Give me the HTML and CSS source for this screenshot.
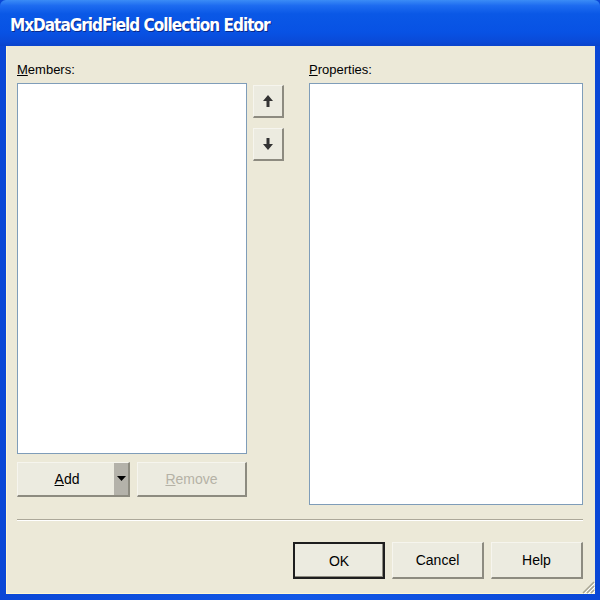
FILE: index.html
```html
<!DOCTYPE html>
<html>
<head>
<meta charset="utf-8">
<link rel="stylesheet" href="styles.css">
</head>
<body>
<div class="window">
  <div class="titlebar"><span class="title">MxDataGridField Collection Editor</span></div>
  <div class="client">
    <div class="main">
      <div class="col-members">
        <div class="label"><u>M</u>embers:</div>
        <div class="listbox members-list"></div>
        <div class="add-row">
          <div class="btn add-btn">
            <span class="add-text"><u>A</u>dd</span>
            <span class="drop"><svg width="9" height="6" viewBox="0 0 9 6"><path d="M0 0H9L4.5 5Z" fill="#000"/></svg></span>
          </div>
          <div class="btn remove-btn"><u>R</u>emove</div>
        </div>
      </div>
      <div class="col-arrows">
        <div class="btn arrow-btn"><svg width="10" height="12" viewBox="0 0 10 12"><path d="M5 0L10 6H6.5V12H3.5V6H0Z" fill="#333"/></svg></div>
        <div class="btn arrow-btn"><svg width="10" height="12" viewBox="0 0 10 12"><path d="M3.5 0H6.5V6H10L5 12L0 6H3.5Z" fill="#333"/></svg></div>
      </div>
      <div class="col-props">
        <div class="label"><u>P</u>roperties:</div>
        <div class="listbox props-list"></div>
      </div>
    </div>
    <div class="separator"></div>
    <div class="footer">
      <div class="btn foot-btn default">OK</div>
      <div class="btn foot-btn">Cancel</div>
      <div class="btn foot-btn">Help</div>
    </div>
    <svg class="grip" width="14" height="14" viewBox="0 0 14 14">
      <path d="M13 2L2 13M13 6L6 13M13 10L10 13" stroke="#a8a594" stroke-width="1.5"/>
      <path d="M14 3L3 14M14 7L7 14M14 11L11 14" stroke="#fff" stroke-width="1"/>
    </svg>
  </div>
</div>
</body>
</html>
```
FILE: styles.css
```css
html, body {
  margin: 0;
  padding: 0;
  background: #0a4fd8;
}
.window {
  width: 600px;
  height: 600px;
  background: linear-gradient(90deg, #0a47d6 0%, #1258e6 50%, #0a47d6 100%);
  display: flex;
  flex-direction: column;
  font-family: "Liberation Sans", Arial, sans-serif;
  box-sizing: border-box;
  padding: 0 5px 6px 6px;
}
.titlebar {
  height: 46px;
  margin: 0 -5px 0 -6px;
  background: linear-gradient(180deg, #3b8cf6 0%, #1e6cf0 12%, #0a58e6 30%, #0852e4 70%, #0a4ad8 90%, #0a44cc 100%);
  border-radius: 6px 6px 0 0;
  display: flex;
  align-items: center;
  padding-left: 10px;
  box-sizing: border-box;
}
.title {
  color: #fff;
  font-family: "DejaVu Sans Condensed", "Liberation Sans", sans-serif;
  font-weight: bold;
  font-size: 17px;
  letter-spacing: -1px;
  text-shadow: 1px 1px 0 #0a2a8a;
  margin-top: 4px;
}
.client {
  flex: 1;
  background: #ece9d8;
  box-shadow: inset 1px 0 0 #fdf7d4, inset 0 -1px 0 #fdf7d4;
  position: relative;
  padding: 14px 12px 0 11px;
  display: flex;
  flex-direction: column;
}
.main {
  display: flex;
}
.label {
  font-size: 13px;
  color: #000;
  height: 23px;
  line-height: 20px;
}
.col-members {
  width: 230px;
  display: flex;
  flex-direction: column;
}
.listbox {
  background: #fff;
  border: 1px solid #7f9db9;
  box-sizing: border-box;
}
.members-list {
  height: 371px;
}
.add-row {
  display: flex;
  margin-top: 8px;
  gap: 7px;
}
.btn {
  background: #ecebe0;
  border: 1px solid #f6f5ee;
  border-right: 2px solid #8d8b80;
  border-bottom: 2px solid #8d8b80;
  box-sizing: border-box;
  display: flex;
  align-items: center;
  justify-content: center;
  font-size: 14px;
  color: #000;
}
.add-btn {
  width: 113px;
  height: 35px;
  padding: 0;
  justify-content: flex-start;
  align-items: stretch;
}
.add-text {
  flex: 1;
  display: flex;
  align-items: center;
  justify-content: center;
  padding-left: 2px;
}
.drop {
  width: 14px;
  background: #b4b2aa;
  display: flex;
  align-items: center;
  justify-content: center;
}
.remove-btn {
  width: 110px;
  height: 35px;
  color: #b5b2a6;
}
.col-arrows {
  width: 31px;
  margin-left: 6px;
  padding-top: 25px;
  display: flex;
  flex-direction: column;
  gap: 10px;
}
.arrow-btn {
  width: 31px;
  height: 33px;
}
.col-props {
  margin-left: 25px;
  width: 274px;
  display: flex;
  flex-direction: column;
}
.props-list {
  height: 422px;
}
.separator {
  margin-top: 14px;
  height: 2px;
  border-top: 1px solid #aca899;
  border-bottom: 1px solid #fff;
  box-sizing: border-box;
}
.footer {
  display: flex;
  justify-content: flex-end;
  gap: 7px;
  margin-top: 21px;
}
.foot-btn {
  width: 92px;
  height: 37px;
}
.foot-btn.default {
  border: 2px solid #1e1e1e;
  box-shadow: inset -1px -1px 0 #8d8b80;
}
.grip {
  position: absolute;
  right: 0;
  bottom: 0;
}
```
